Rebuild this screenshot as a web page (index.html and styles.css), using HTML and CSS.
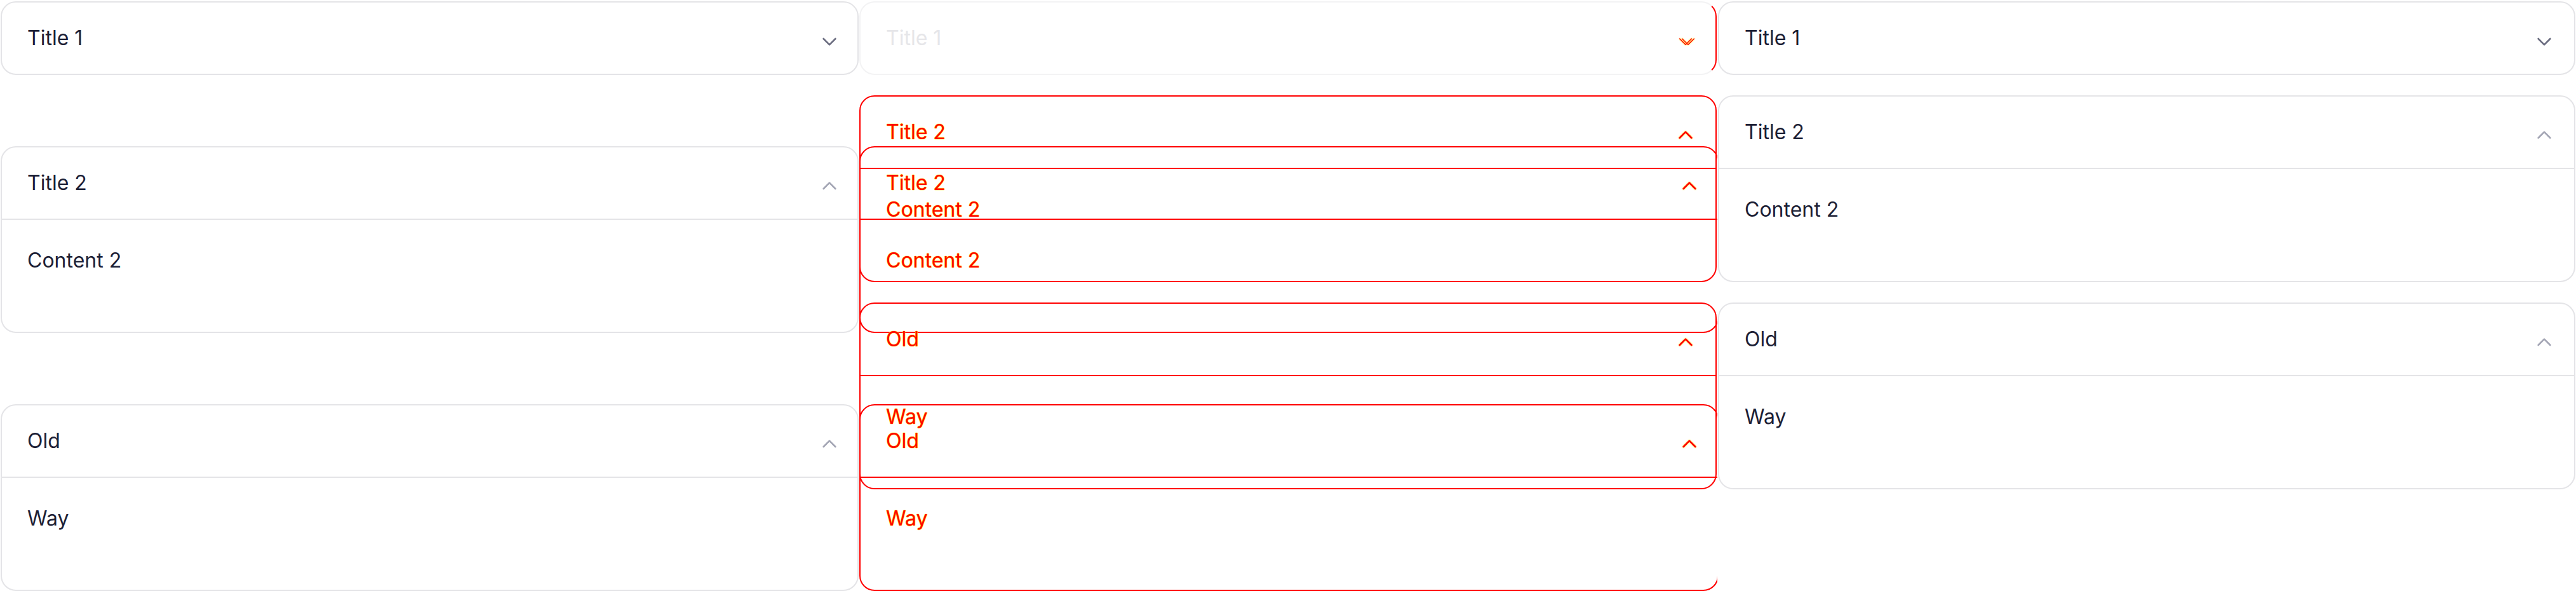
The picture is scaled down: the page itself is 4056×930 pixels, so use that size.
FILE: index.html
```html
<!DOCTYPE html>
<html lang="en">
<head>
<meta charset="utf-8">
<title>Accordion visual diff</title>
<link rel="stylesheet" href="styles.css">
</head>
<body>
<main class="board">
  <section class="col col-expected">
    <div class="acc">
      <div class="acc-head"><span class="acc-title">Title 1</span><svg class="chev chev-down" viewBox="0 0 24 24"><path d="M19 9l-7 7-7-7"/></svg></div>
    </div>
    <div class="acc">
      <div class="acc-head"><span class="acc-title">Title 2</span><svg class="chev chev-up" viewBox="0 0 24 24"><path d="M5 15l7-7 7 7"/></svg></div>
      <div class="acc-body">Content 2</div>
    </div>
    <div class="acc">
      <div class="acc-head"><span class="acc-title">Old</span><svg class="chev chev-up" viewBox="0 0 24 24"><path d="M5 15l7-7 7 7"/></svg></div>
      <div class="acc-body">Way</div>
    </div>
  </section>

  <section class="col-diff">
    <div class="layer layer-exp">
      <div class="spacer"></div>
      <div class="acc">
        <div class="acc-head"><span class="acc-title">Title 2</span><svg class="chev chev-up" viewBox="0 0 24 24"><path d="M5 15l7-7 7 7"/></svg></div>
        <div class="acc-body">Content 2</div>
      </div>
      <div class="acc">
        <div class="acc-head"><span class="acc-title">Old</span><svg class="chev chev-up" viewBox="0 0 24 24"><path d="M5 15l7-7 7 7"/></svg></div>
        <div class="acc-body">Way</div>
      </div>
    </div>
    <div class="layer layer-act">
      <div class="acc acc-same">
        <div class="acc-head"><span class="acc-title">Title 1</span><svg class="chev chev-double" viewBox="0 0 24 24"><path d="M19 9l-7 7-7-7"/><path d="M22 9l-7 7-7-7"/></svg></div>
      </div>
      <div class="acc">
        <div class="acc-head"><span class="acc-title">Title 2</span><svg class="chev chev-up" viewBox="0 0 24 24"><path d="M5 15l7-7 7 7"/></svg></div>
        <div class="acc-body">Content 2</div>
      </div>
      <div class="acc">
        <div class="acc-head"><span class="acc-title">Old</span><svg class="chev chev-up" viewBox="0 0 24 24"><path d="M5 15l7-7 7 7"/></svg></div>
        <div class="acc-body">Way</div>
      </div>
    </div>
  </section>

  <section class="col col-actual">
    <div class="acc">
      <div class="acc-head"><span class="acc-title">Title 1</span><svg class="chev chev-down" viewBox="0 0 24 24"><path d="M19 9l-7 7-7-7"/></svg></div>
    </div>
    <div class="acc">
      <div class="acc-head"><span class="acc-title">Title 2</span><svg class="chev chev-up" viewBox="0 0 24 24"><path d="M5 15l7-7 7 7"/></svg></div>
      <div class="acc-body">Content 2</div>
    </div>
    <div class="acc">
      <div class="acc-head"><span class="acc-title">Old</span><svg class="chev chev-up" viewBox="0 0 24 24"><path d="M5 15l7-7 7 7"/></svg></div>
      <div class="acc-body">Way</div>
    </div>
  </section>
</main>
</body>
</html>
```

FILE: styles.css
```css
* {
  box-sizing: border-box;
  margin: 0;
  padding: 0;
}

html,
body {
  width: 4056px;
  height: 930px;
  overflow: hidden;
  background: #ffffff;
}

body {
  font-family: Inter, "Liberation Sans", sans-serif;
}

.board {
  display: grid;
  grid-template-columns: 1352px 1352px 1352px;
  height: 930px;
}

.col {
  display: flex;
  flex-direction: column;
  align-items: flex-start;
  padding: 2px 0 0 1px;
  overflow: hidden;
}

.col-expected {
  gap: 112px;
}

.col-actual {
  gap: 32px;
}

.acc {
  flex: none;
  width: 1351px;
  border: 2px solid #e4e4e7;
  border-radius: 24px;
  background: #ffffff;
}

.acc-head {
  height: 112px;
  display: flex;
  align-items: center;
  justify-content: space-between;
  padding: 0 28px 0 40px;
}

.acc-title {
  font-size: 32px;
  line-height: 48px;
  color: #1c2035;
}

.chev {
  flex: none;
  width: 32px;
  height: 32px;
  margin-top: 10px;
  overflow: visible;
  fill: none;
  stroke-width: 2;
  stroke-linecap: round;
  stroke-linejoin: round;
}

.chev-down {
  stroke: #6b6d80;
}

.chev-up {
  stroke: #a3a5b4;
}

.acc-body {
  height: 178px;
  border-top: 2px solid #e4e4e7;
  padding: 40px 40px 0;
  font-size: 32px;
  line-height: 48px;
  color: #1c2035;
}

.col-actual .acc {
  width: 1350px;
}

.col-actual .acc-head {
  padding-right: 31px;
}

/* diff column: expected and actual outlines overlaid */
.col-diff {
  display: grid;
  overflow: hidden;
  background: #ffffff;
}

.layer {
  grid-area: 1 / 1;
  display: flex;
  flex-direction: column;
  align-items: flex-start;
  padding: 2px 0 0 1px;
}

.layer-exp {
  gap: 112px;
}

.layer-act {
  gap: 32px;
}

.spacer {
  flex: none;
  height: 116px;
}

.col-diff .acc {
  background: transparent;
  border-color: #ff0000;
}

.layer-exp .acc {
  width: 1353px;
}

.layer-act .acc {
  width: 1350px;
}

.layer-act .acc-head {
  padding-right: 31px;
}

.col-diff .acc-body {
  border-top-color: #ff0000;
}

.col-diff .acc-title,
.col-diff .acc-body {
  color: #ff0000;
  text-shadow: 0 0 1px #ffee00, 0 0 1px #ffee00, 0 0 1px #ffee00;
}

.col-diff .chev {
  stroke: #ff0000;
  filter: drop-shadow(0 0 0.8px #ffee00);
}

.col-diff .chev-double {
  stroke-width: 1.1;
}

.col-diff .acc-same {
  border-color: #f3f3f4 #ff0000 #f3f3f4 #f3f3f4;
}

.col-diff .acc-same .acc-title {
  color: #e6e6e9;
  text-shadow: none;
}
```
